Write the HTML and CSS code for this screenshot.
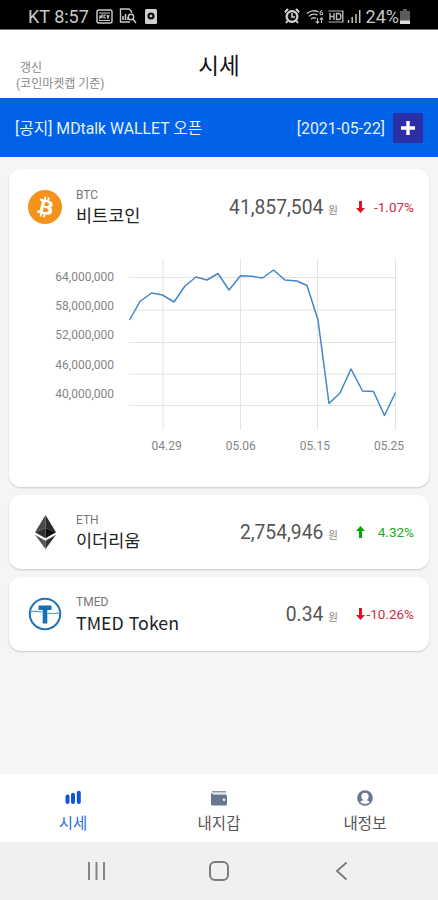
FILE: index.html
```html
<!DOCTYPE html>
<html lang="ko">
<head>
    <meta charset="UTF-8">
    <meta name="viewport" content="width=device-width, initial-scale=1.0">
    <title>시세</title>
    <link rel="stylesheet" href="styles.css">
</head>
<body>
<div class="status-bar">
    <div class="status-left">
        <span>KT 8:57</span>
        <svg class="icon-news" width="17" height="15" viewBox="0 0 17 15" fill="none" stroke="#c8c8c8" stroke-width="1.5">
            <rect x="1" y="1" width="15" height="13" rx="2"/>
            <path d="M3 4h11M3 11.5h11" stroke-width="1"/>
            <path d="M4 6.2v3l2-3v3M10 6H8v3h2M11 6l1 3 1-3" stroke-width="1.2"/>
        </svg>
        <svg class="icon-report" width="18" height="16" viewBox="0 0 18 16" fill="none" stroke="#c8c8c8" stroke-width="1.4">
            <path d="M12.5 5V3.5L10 1H1.5v13H11"/>
            <path d="M4 12V8M6.5 12V6M9 12V9" stroke-width="1.6"/>
            <circle cx="12" cy="9" r="2.7"/>
            <path d="M14 11l3 4"/>
        </svg>
        <svg class="icon-app" width="12" height="15" viewBox="0 0 12 15">
            <rect width="12" height="15" rx="1.5" fill="#d0d0d0"/>
            <circle cx="6" cy="7" r="3.6" fill="#111"/>
            <circle cx="6" cy="7" r="1.3" fill="#d0d0d0"/>
        </svg>
    </div>
    <div class="status-right">
        <svg width="16" height="16" viewBox="0 0 16 16">
            <circle cx="8" cy="8.5" r="6.5" fill="#d4d4d4"/>
            <path d="M.8 4.2L4 1M15.2 4.2L12 1M3.5 13L2 15M12.5 13l1.5 2" stroke="#d4d4d4" stroke-width="2"/>
            <circle cx="8" cy="8.5" r="4.3" fill="#111"/>
            <path d="M8 5v4h3" stroke="#d4d4d4" stroke-width="1.5" fill="none"/>
        </svg>
        <svg class="icon-wifi" width="18" height="15" viewBox="0 0 18 15" fill="none" stroke="#bdbdbd" stroke-width="1.4">
            <path d="M1 4.5C4 1.5 9 1 12.5 3M3 7.200c2.5-2.200 6-2.500 8.500-1M5 10c1.500-1.400 3.500-1.600 5-.6"/>
            <path d="M16.5 1.5c-2 0-2.500 1-2.500 3a1.300 1.300 0 1 0 1.300-1.300" stroke-width="1.1"/>
            <path d="M11.500 9v5M9.800 12.300l1.700 1.900 1.700-1.900M15.500 14V9M13.800 10.700l1.700-1.900 1.700 1.900" stroke-width="1.1"/>
        </svg>
        <svg class="icon-hd" width="16" height="13" viewBox="0 0 16 13" fill="none" stroke="#b8b8b8" stroke-width="1.4">
            <path d="M.5 1h15M.5 12h15" stroke-width="1"/>
            <path d="M2 3v7M6 3v7M2 6.500h4M8.500 3.500v6h2.500c2.500 0 2.500-6 0-6zM14.800 1v11"/>
        </svg>
        <svg class="icon-signal" width="14" height="14" viewBox="0 0 14 14" stroke="#c4c4c4" stroke-width="1.5">
            <path d="M1.500 14v-3M5.200 14V8M9 14V5M12.700 14V1"/>
        </svg>
        <span>24%</span>
        <svg class="icon-battery" width="10" height="15" viewBox="0 0 10 15">
            <path d="M3 0h4v2h3v13H0V2h3z" fill="#5c5c5c"/>
            <path d="M0 11.500h10V15H0z" fill="#dedede"/>
        </svg>
    </div>
</div>

<header class="header">
    <div class="refresh">
        <span class="refresh-label">갱신</span>
        <span>(코인마켓캡 기준)</span>
    </div>
    <h1>시세</h1>
</header>

<div class="notice">
    <span>[공지] MDtalk WALLET 오픈</span>
    <span class="notice-date">[2021-05-22]</span>
    <button class="notice-button">
        <svg width="14" height="14" viewBox="0 0 14 14"><path d="M7 0v14M0 7h14" stroke="#fff" stroke-width="3.4"/></svg>
    </button>
</div>

<main class="coins">
    <section class="card card-open">
        <div class="coin">
            <svg class="coin-logo" width="34" height="34" viewBox="0 0 32 32">
                <circle cx="16" cy="16" r="16" fill="#f4921b"/>
                <path fill="#fff" d="M23.189 14.02c.314-2.096-1.283-3.223-3.465-3.975l.708-2.840-1.728-.43-.69 2.765c-.454-.114-.92-.22-1.385-.326l.695-2.783L15.596 6l-.708 2.839c-.376-.086-.746-.17-1.104-.26l.002-.009-2.384-.595-.46 1.846s1.283.294 1.256.312c.7.175.826.638.805 1.006l-.806 3.235c.048.012.11.030.18.057l-.183-.045-1.130 4.532c-.086.212-.303.531-.793.410.018.025-1.256-.313-1.256-.313l-.858 1.978 2.250.561c.418.105.828.215 1.231.318l-.715 2.872 1.727.430.708-2.840c.472.127.930.245 1.378.357l-.706 2.828 1.728.430.715-2.866c2.948.558 5.164.333 6.097-2.333.752-2.146-.037-3.385-1.588-4.192 1.130-.260 1.980-1.003 2.207-2.538zm-3.950 5.538c-.533 2.147-4.148.986-5.320.695l.950-3.805c1.172.293 4.929.872 4.370 3.110zm.535-5.569c-.487 1.953-3.495.960-4.470.717l.860-3.450c.975.243 4.118.696 3.610 2.733z"/>
            </svg>
            <div class="coin-name">
                <span class="symbol">BTC</span>
                <span class="name">비트코인</span>
            </div>
            <div class="price">41,857,504<span class="unit">원</span></div>
            <div class="change down">
                <svg width="9" height="12" viewBox="0 0 9 12"><path d="M3 0h3v7h3L4.500 12 0 7h3z"/></svg>
                <span>-1.07%</span>
            </div>
        </div>
        <div class="chart">
            <div class="y-axis">
                <span>64,000,000</span>
                <span>58,000,000</span>
                <span>52,000,000</span>
                <span>46,000,000</span>
                <span>40,000,000</span>
            </div>
            <svg class="plot" width="270" height="172" viewBox="128 258 270 172" fill="none">
                <path class="grid-line" d="M129 277.500H396M129 310H396M129 342.500H396M129 374H396M129 405.500H396"/>
                <path class="grid-line" d="M163 258.500V430M240.500 258.500V430M317.500 258.500V430M395.500 258.500V430"/>
                <polyline class="price-line" points="129.500,320 140,301.500 151.500,293 162.500,295 174,302 185,286 196,277 207,280 218,273.500 229,290 240.500,275.700 251.500,276.300 262.500,278 273.500,270 285,280 297,281 307,285.500 318,320 329,403.500 340,393 351,369 362.500,391 373.500,391.500 384.500,415.500 395.500,392.500"/>
            </svg>
            <div class="x-axis">
                <span>04.29</span>
                <span>05.06</span>
                <span>05.15</span>
                <span>05.25</span>
            </div>
        </div>
    </section>

    <section class="card">
        <div class="coin">
            <svg class="coin-logo" width="34" height="34" viewBox="0 0 34 34">
                <path fill="#4a4a4a" d="M17.500 0L7 17.300 17.500 13z"/>
                <path fill="#2b2b2b" d="M17.500 0L28 17.300 17.500 13z"/>
                <path fill="#303030" d="M17.500 13L7 17.300l10.500 6z"/>
                <path fill="#0c0c0c" d="M17.500 13L28 17.300l-10.500 6z"/>
                <path fill="#555" d="M7 19.800l10.500 6V34z"/>
                <path fill="#333" d="M28 19.800l-10.500 6V34z"/>
            </svg>
            <div class="coin-name">
                <span class="symbol">ETH</span>
                <span class="name">이더리움</span>
            </div>
            <div class="price">2,754,946<span class="unit">원</span></div>
            <div class="change up">
                <svg width="9" height="12" viewBox="0 0 9 12"><path d="M3 12h3V5h3L4.500 0 0 5h3z"/></svg>
                <span>4.32%</span>
            </div>
        </div>
    </section>

    <section class="card">
        <div class="coin">
            <svg class="coin-logo" width="34" height="34" viewBox="0 0 34 34">
                <circle cx="17" cy="17" r="15.200" fill="#fff" stroke="#1c74b4" stroke-width="2"/>
                <path fill="#1670b5" d="M10.500 8.500h13V13h-4.200v13.500h-4.600V13h-4.200z"/>
                <path fill="none" stroke="#fff" stroke-width="2.400" d="M3 15.800h11.700M19.300 15.800H31"/>
                <path fill="none" stroke="#5ba3d4" stroke-width="1.200" d="M2 14.600c5-.4 9-.2 13 .4M19 16.200c5 .6 9 .4 13-.6"/>
            </svg>
            <div class="coin-name">
                <span class="symbol">TMED</span>
                <span class="name name-latin">TMED Token</span>
            </div>
            <div class="price">0.34<span class="unit">원</span></div>
            <div class="change down">
                <svg width="9" height="12" viewBox="0 0 9 12"><path d="M3 0h3v7h3L4.500 12 0 7h3z"/></svg>
                <span>-10.26%</span>
            </div>
        </div>
    </section>
</main>

<nav class="tabs">
    <a class="tab active">
        <svg width="18" height="16" viewBox="0 0 18 16" stroke="#0f55dc" stroke-width="4" stroke-linecap="round">
            <path d="M3.500 6.500v5.500M9 4.800v7.200M14.800 2.800v9.200"/>
        </svg>
        <span>시세</span>
    </a>
    <a class="tab">
        <svg width="18" height="16" viewBox="0 0 18 16">
            <path fill="#8796aa" d="M2.500 1H16v1.500H2A1.500 1.500 0 0 1 2.500 1z"/>
            <path fill="#66778f" d="M1 2.500V14a1.500 1.500 0 0 0 1.500 1.500h13A1.500 1.500 0 0 0 17 14V6a1.500 1.500 0 0 0-1.500-1.500H3z"/>
            <path fill="none" stroke="#e4e9ef" stroke-width="1" d="M2.500 3.500h13.500"/>
            <circle cx="14" cy="9.800" r="1.200" fill="#fff"/>
        </svg>
        <span>내지갑</span>
    </a>
    <a class="tab">
        <svg width="16" height="16" viewBox="0 0 16 16">
            <circle cx="8" cy="8" r="7.800" fill="#66778f"/>
            <circle cx="8" cy="6.500" r="3.700" fill="#fff"/>
            <path fill="#fff" d="M3.300 12.600c.4-1.900 2.200-2.600 4.700-2.600s4.300.7 4.700 2.600c-2.600 1.900-6.800 1.900-9.400 0z"/>
        </svg>
        <span>내정보</span>
    </a>
</nav>

<div class="system-nav">
    <svg width="20" height="20" viewBox="0 0 20 20" stroke="#858585" stroke-width="2"><path d="M2 1v18M9.500 1v18M17 1v18"/></svg>
    <svg width="20" height="20" viewBox="0 0 20 20" fill="none" stroke="#7c7c7c" stroke-width="2"><rect x="1" y="1" width="18" height="18" rx="5"/></svg>
    <svg width="20" height="20" viewBox="0 0 20 20" fill="none" stroke="#7c7c7c" stroke-width="2"><path d="M14.500 1.500L5 10l9.500 8.500"/></svg>
</div>
</body>
</html>
```

FILE: styles.css
```css
* {
    box-sizing: border-box;
}
body {
    margin: 0;
    height: 900px;
    display: flex;
    flex-direction: column;
    background-color: #f5f5f5;
    font-family: Roboto, "Noto Sans CJK KR", sans-serif;
    color: #222;
}
svg {
    display: block;
    flex-shrink: 0;
}

/* status bar */
.status-bar {
    height: 30px;
    padding: 3px 28px 0;
    display: flex;
    justify-content: space-between;
    background-color: #000;
    border-bottom: 1px solid #777;
    color: #c8c8c8;
    font-size: 18px;
    line-height: 26px;
}
.status-left,
.status-right {
    display: flex;
    align-items: center;
}
.status-left span,
.status-right span {
    padding-top: 1px;
}
.icon-news {
    margin-left: 7px;
}
.icon-report {
    margin-left: 6px;
}
.icon-app {
    margin-left: 8px;
}
.icon-wifi {
    margin-left: 6px;
}
.icon-hd {
    margin-left: 4px;
}
.icon-signal {
    margin: 0 5px 0 3px;
}
.icon-battery {
    margin-left: 1px;
}

/* header */
.header {
    height: 68px;
    display: grid;
    grid-template-columns: 1fr auto 1fr;
    background-color: #fff;
}
.refresh {
    padding: 30px 0 0 16px;
    display: flex;
    flex-direction: column;
    color: #8a8a8a;
    font-size: 12px;
    line-height: 16px;
}
.refresh-label {
    padding-left: 4px;
}
h1 {
    margin: 0;
    padding-top: 21px;
    color: #111;
    font-size: 22.5px;
    font-weight: 400;
    line-height: 30px;
}

/* notice */
.notice {
    height: 59px;
    padding: 0 15px;
    display: flex;
    align-items: center;
    background-color: #0062e6;
    color: #e4efff;
    font-size: 15.8px;
    line-height: 20px;
}
.notice span {
    padding-top: 2px;
}
.notice-date {
    margin-left: auto;
}
.notice-button {
    width: 30px;
    height: 30px;
    margin-left: 8px;
    padding: 0;
    display: flex;
    align-items: center;
    justify-content: center;
    background-color: #2c2ea6;
    border: none;
    border-radius: 2px;
}

/* coin cards */
.coins {
    flex: 1;
    padding: 12px 9px 0;
    display: flex;
    flex-direction: column;
    gap: 8.5px;
}
.card {
    height: 73.5px;
    background-color: #fff;
    border-radius: 12px;
    box-shadow: 0 1px 2px rgba(0, 0, 0, 0.18);
}
.card-open {
    height: 317.5px;
}
.coin {
    height: 74px;
    padding: 0 15px 0 19px;
    display: flex;
    align-items: center;
}
.card-open .coin {
    height: 76px;
}
.coin-name {
    margin-left: 14px;
    padding-bottom: 2px;
    display: flex;
    flex-direction: column;
}
.symbol {
    color: #777;
    font-size: 12px;
    line-height: 18px;
}
.name {
    color: #222;
    font-family: "Noto Sans CJK KR", sans-serif;
    font-size: 17.5px;
    line-height: 22px;
}
.name-latin {
    font-size: 17.8px;
}
.price {
    margin-left: auto;
    padding-top: 5px;
    color: #555;
    font-size: 19.3px;
    line-height: 24px;
}
.unit {
    margin-left: 5px;
    color: #888;
    font-size: 10.5px;
}
.change {
    width: 58px;
    margin-left: 18px;
    display: flex;
    align-items: center;
    justify-content: space-between;
    font-size: 13.5px;
    line-height: 18px;
}
.down {
    color: #cf2a42;
    fill: #e01020;
}
.up {
    color: #22aa22;
    fill: #00a800;
}

/* chart */
.chart {
    padding-top: 13px;
    display: grid;
    grid-template-columns: 105px 270px;
    column-gap: 14px;
    color: #858585;
    font-size: 12px;
}
.y-axis {
    padding-top: 4.5px;
    display: flex;
    flex-direction: column;
    text-align: right;
    line-height: 29.4px;
}
.grid-line {
    stroke: #e4e4e4;
    stroke-width: 1;
}
.price-line {
    stroke: #4485cb;
    stroke-width: 1.5;
    stroke-linejoin: round;
}
.x-axis {
    grid-column: 2;
    padding: 7px 0 0 23.5px;
    display: flex;
    gap: 44px;
    line-height: 18px;
}

/* tabs */
.tabs {
    height: 68px;
    padding-top: 16px;
    display: grid;
    grid-template-columns: repeat(3, 1fr);
    background-color: #fff;
}
.tab {
    display: flex;
    flex-direction: column;
    align-items: center;
    gap: 8px;
    color: #555;
    font-size: 15.5px;
    line-height: 20px;
}
.tab.active {
    color: #2a70d6;
}

.system-nav {
    height: 58px;
    display: flex;
    align-items: center;
    justify-content: center;
    gap: 102.5px;
    background-color: #f0f0f0;
}
```
